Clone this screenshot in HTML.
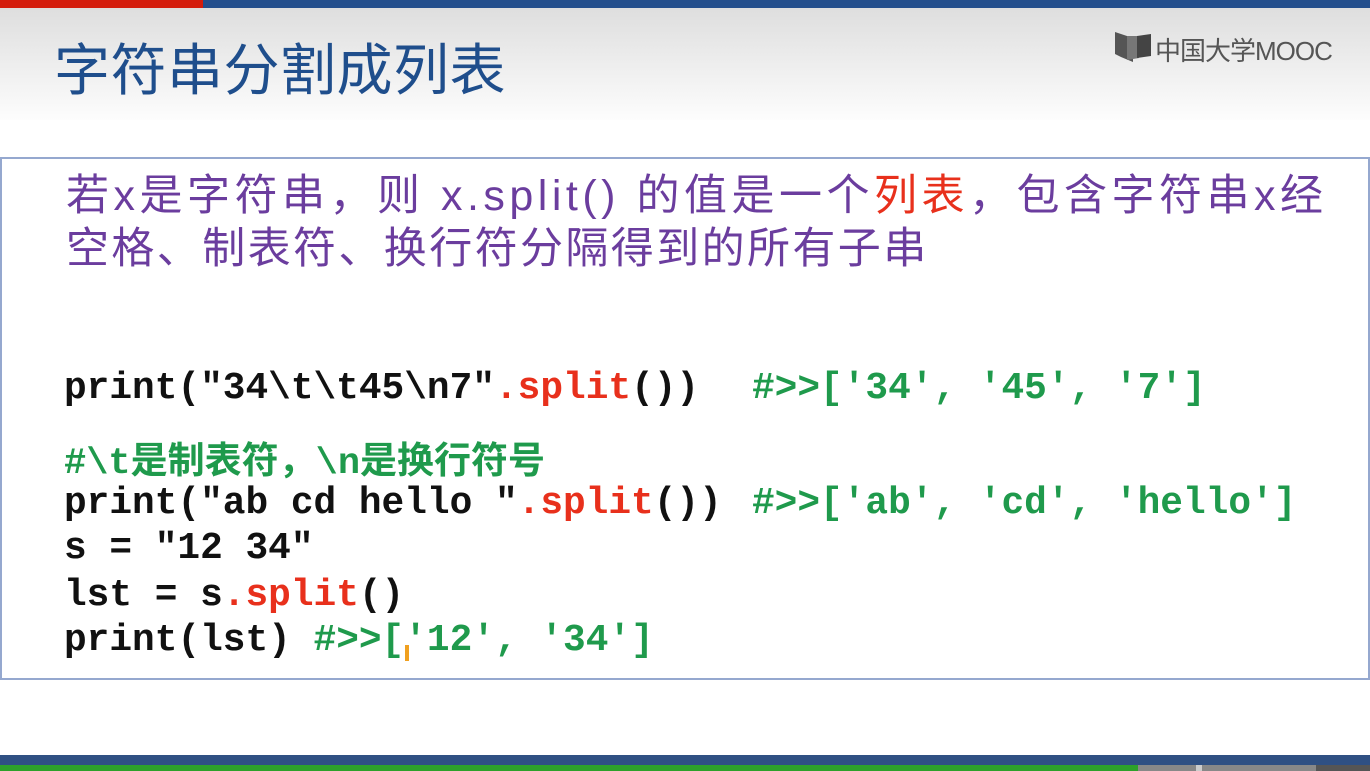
<!DOCTYPE html>
<html><head><meta charset="utf-8"><style>
body{margin:0;width:1370px;height:771px;position:relative;overflow:hidden;background:#fff;font-family:"Liberation Sans","Noto Sans CJK SC",sans-serif}
.a{position:absolute;white-space:pre}
.code{font-family:"Liberation Mono","Noto Sans CJK SC",monospace;font-weight:bold;font-size:37.8px;color:#111;line-height:46px}
.r{color:#e8301c}.g{color:#1f9a4c}
.t{color:#6b3d9e;font-size:43px;letter-spacing:2.4px;line-height:53px}
.cj{font-family:'Noto Sans CJK SC',sans-serif;font-size:37px}
</style></head><body>
<div class="a" style="left:0;top:0;width:1370px;height:8px;background:#234e8c"></div>
<div class="a" style="left:0;top:0;width:203px;height:8px;background:#d41c0c"></div>
<div class="a" style="left:0;top:8px;width:1370px;height:112px;background:linear-gradient(#dedede,#fdfdfd)"></div>
<div class="a" style="left:54px;top:26px;font-size:56px;color:#1f4e8c;letter-spacing:0.5px">字符串分割成列表</div>
<svg class="a" style="left:1113px;top:30px" width="42" height="34" viewBox="0 0 42 34"><path d="M2 2 L20 8 L20 32 L8 27 L2 24Z" fill="#555"/><path d="M14 6 L26 6 L26 28 L14 30Z" fill="#777"/><path d="M24 6 L38 4 L38 26 L24 28Z" fill="#444"/></svg>
<div class="a" style="left:1155px;top:31px;font-size:26px;color:#555;letter-spacing:-1px">中国大学MOOC</div>
<div class="a" style="left:0;top:157px;width:1366px;height:519px;border:2px solid #95a8cf"></div>
<div class="a t" style="left:66px;top:170px;letter-spacing:4.5px">若x是字符串，则 x.split() 的值是一个<span class="r">列表</span>，包含字符串x经</div>
<div class="a t" style="left:66px;top:223px">空格、制表符、换行符分隔得到的所有子串</div>
<div class="a code" style="left:64px;top:366px">print("34\t\t45\n7"<span class="r">.split</span>())</div>
<div class="a code g" style="left:752px;top:366px">#&gt;&gt;['34', '45', '7']</div>
<div class="a code g" style="left:64px;top:434px;font-size:37px">#\t<span class="cj">是制表符，</span>\n<span class="cj">是换行符号</span></div>
<div class="a code" style="left:64px;top:481px">print("ab cd hello "<span class="r">.split</span>())</div>
<div class="a code g" style="left:752px;top:481px">#&gt;&gt;['ab', 'cd', 'hello']</div>
<div class="a code" style="left:64px;top:526px">s = "12 34"</div>
<div class="a code" style="left:64px;top:573px">lst = s<span class="r">.split</span>()</div>
<div class="a code" style="left:64px;top:618px">print(lst) <span class="g">#&gt;&gt;['12', '34']</span></div>
<div class="a" style="left:405px;top:645px;width:4px;height:16px;background:#f0a020"></div>
<div class="a" style="left:0;top:755px;width:1370px;height:10px;background:#2f5083"></div>
<div class="a" style="left:0;top:765px;width:1138px;height:6px;background:#2da12a"></div>
<div class="a" style="left:1138px;top:765px;width:232px;height:6px;background:#888"></div>
<div class="a" style="left:1196px;top:765px;width:6px;height:6px;background:#ccc"></div>
<div class="a" style="left:1316px;top:765px;width:54px;height:6px;background:#555"></div>
</body></html>
